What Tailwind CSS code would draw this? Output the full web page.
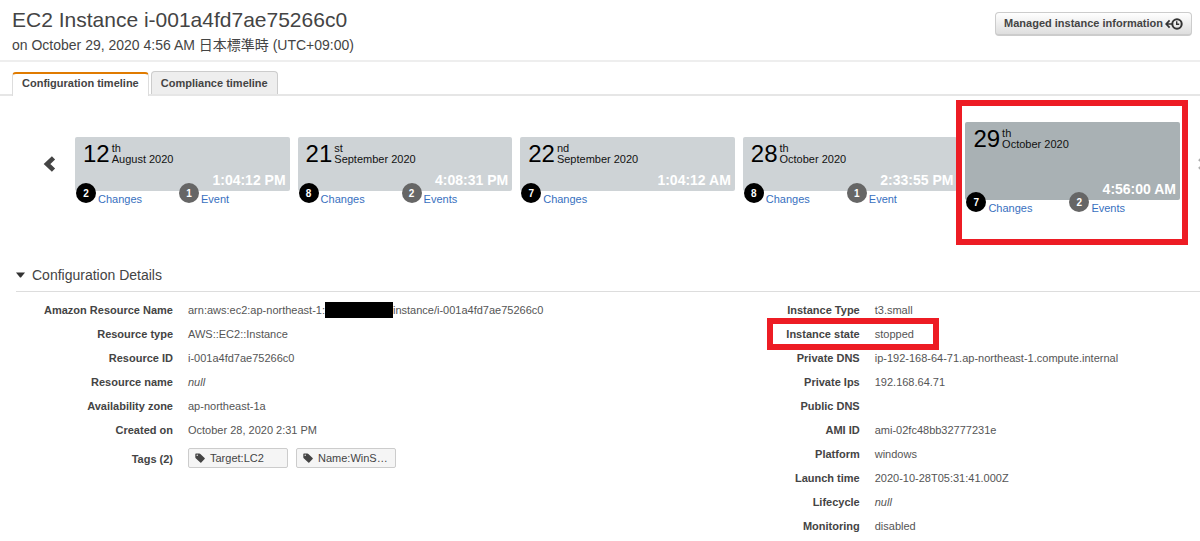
<!DOCTYPE html>
<html lang="en">
<head>
<meta charset="utf-8">
<meta name="viewport" content="width=device-width, initial-scale=1">
<title>EC2 Instance timeline</title>
<script src="https://cdn.jsdelivr.net/npm/@tailwindcss/browser@4"></script>
</head>
<body class="overflow-x-hidden bg-white font-['Liberation_Sans','Noto_Sans_CJK_JP',sans-serif] text-[11px] text-[#444]">
<svg class="hidden" aria-hidden="true">
  <symbol id="tag" viewBox="0 0 10 10"><path fill="currentColor" fill-rule="evenodd" d="M0.3 1.2Q0.3 .5 1 .5H4.4Q5 .5 5.4 .9L9.6 5.1Q10.1 5.6 9.6 6.1L6.3 9.4Q5.8 9.9 5.3 9.4L.7 5.2Q.3 4.8 .3 4.2ZM2.2 1.6A.7 .7 0 1 0 2.2 3A.7 .7 0 1 0 2.2 1.6Z"/></symbol>
</svg>

<header class="flex items-start justify-between border-b-2 border-[#eee] pt-[5px] pr-2 pb-1 pl-3">
  <div>
    <h1 class="text-[21px] leading-[29px]">EC2 Instance i-001a4fd7ae75266c0</h1>
    <p class="text-[14px] leading-[22px]">on October 29, 2020 4:56 AM 日本標準時 (UTC+09:00)</p>
  </div>
  <button class="mt-[7px] flex h-6 items-center gap-0.5 rounded-sm border border-b-2 border-[#ccc] bg-linear-to-b from-white to-[#dedede] px-2 font-bold">
    Managed instance information
    <svg class="h-3 w-[18px]" viewBox="0 0 18 12" fill="none" stroke="#333" aria-hidden="true"><circle cx="12" cy="6" r="4.7" stroke-width="2"/><path d="M11.7 3.2V6.3H14.2" stroke-width="1.4"/><path d="M7 6H1.2M4.6 2.4L1.2 6L4.6 9.6" stroke-width="1.7"/></svg>
  </button>
</header>

<nav class="mt-[9px] flex items-end border-b-2 border-[#e6e6e6] pl-3" role="tablist">
  <button role="tab" aria-selected="true" class="-mb-0.5 h-6 rounded-t-sm border-x border-t-2 border-x-[#ddd] border-t-[#e07b00] bg-white px-[9px] pb-[3px] font-bold">Configuration timeline</button>
  <button role="tab" aria-selected="false" class="ml-0.5 h-[23px] rounded-t-sm border border-b-0 border-[#ccc] bg-[#eee] px-[9px] font-bold">Compliance timeline</button>
</nav>

<section class="relative flex items-start pt-[26px]" aria-label="Timeline">
  <button class="mt-[34px] ml-[43px] mr-[18px] h-4 w-3.5 shrink-0" aria-label="Earlier"><svg class="h-4 w-3.5" viewBox="0 0 14 16" aria-hidden="true"><path d="M10.5 1.8L4 8L10.5 14.2" fill="none" stroke="#444" stroke-width="4.6"/></svg></button>
  <ol class="mr-5 grid flex-1 grid-cols-5 items-start gap-2">
    <li class="pt-[15px]">
      <div class="flex h-[54px] flex-col justify-between rounded-xs bg-[#ced3d6] pt-1 pr-1 pl-2 text-[#111]">
        <div class="flex gap-0.5"><span class="text-[24px] leading-[26px] text-black">12</span><span class="pt-0.5 leading-[11px]">th<br>August 2020</span></div>
        <time class="text-right text-[14px] leading-[22px] font-bold text-white">1:04:12 PM</time>
      </div>
      <div class="-mt-2 flex pl-px text-[#3870c0]">
        <a href="#" class="flex h-5 w-[103px] items-center gap-0.5"><span class="grid size-5 place-items-center rounded-full bg-black text-[10px] font-bold text-white">2</span><span class="pt-3">Changes</span></a>
        <a href="#" class="flex h-5 items-center gap-0.5"><span class="grid size-5 place-items-center rounded-full bg-[#666] text-[10px] font-bold text-white">1</span><span class="pt-3">Event</span></a>
      </div>
    </li>
    <li class="pt-[15px]">
      <div class="flex h-[54px] flex-col justify-between rounded-xs bg-[#ced3d6] pt-1 pr-1 pl-2 text-[#111]">
        <div class="flex gap-0.5"><span class="text-[24px] leading-[26px] text-black">21</span><span class="pt-0.5 leading-[11px]">st<br>September 2020</span></div>
        <time class="text-right text-[14px] leading-[22px] font-bold text-white">4:08:31 PM</time>
      </div>
      <div class="-mt-2 flex pl-px text-[#3870c0]">
        <a href="#" class="flex h-5 w-[103px] items-center gap-0.5"><span class="grid size-5 place-items-center rounded-full bg-black text-[10px] font-bold text-white">8</span><span class="pt-3">Changes</span></a>
        <a href="#" class="flex h-5 items-center gap-0.5"><span class="grid size-5 place-items-center rounded-full bg-[#666] text-[10px] font-bold text-white">2</span><span class="pt-3">Events</span></a>
      </div>
    </li>
    <li class="pt-[15px]">
      <div class="flex h-[54px] flex-col justify-between rounded-xs bg-[#ced3d6] pt-1 pr-1 pl-2 text-[#111]">
        <div class="flex gap-0.5"><span class="text-[24px] leading-[26px] text-black">22</span><span class="pt-0.5 leading-[11px]">nd<br>September 2020</span></div>
        <time class="text-right text-[14px] leading-[22px] font-bold text-white">1:04:12 AM</time>
      </div>
      <div class="-mt-2 flex pl-px text-[#3870c0]">
        <a href="#" class="flex h-5 items-center gap-0.5"><span class="grid size-5 place-items-center rounded-full bg-black text-[10px] font-bold text-white">7</span><span class="pt-3">Changes</span></a>
      </div>
    </li>
    <li class="pt-[15px]">
      <div class="flex h-[54px] flex-col justify-between rounded-xs bg-[#ced3d6] pt-1 pr-1 pl-2 text-[#111]">
        <div class="flex gap-0.5"><span class="text-[24px] leading-[26px] text-black">28</span><span class="pt-0.5 leading-[11px]">th<br>October 2020</span></div>
        <time class="text-right text-[14px] leading-[22px] font-bold text-white">2:33:55 PM</time>
      </div>
      <div class="-mt-2 flex pl-px text-[#3870c0]">
        <a href="#" class="flex h-5 w-[103px] items-center gap-0.5"><span class="grid size-5 place-items-center rounded-full bg-black text-[10px] font-bold text-white">8</span><span class="pt-3">Changes</span></a>
        <a href="#" class="flex h-5 items-center gap-0.5"><span class="grid size-5 place-items-center rounded-full bg-[#666] text-[10px] font-bold text-white">1</span><span class="pt-3">Event</span></a>
      </div>
    </li>
    <li class="relative" aria-current="true">
      <div class="flex h-[78px] flex-col justify-between rounded-xs bg-[#a9b1b4] pt-1 pr-1 pl-2 text-[#111]">
        <div class="flex gap-0.5"><span class="text-[24px] leading-[26px] text-black">29</span><span class="pt-0.5 leading-[11px]">th<br>October 2020</span></div>
        <time class="text-right text-[14px] leading-[22px] font-bold text-white">4:56:00 AM</time>
      </div>
      <div class="-mt-2 flex pl-px text-[#3870c0]">
        <a href="#" class="flex h-5 w-[103px] items-center gap-0.5"><span class="grid size-5 place-items-center rounded-full bg-black text-[10px] font-bold text-white">7</span><span class="pt-3">Changes</span></a>
        <a href="#" class="flex h-5 items-center gap-0.5"><span class="grid size-5 place-items-center rounded-full bg-[#666] text-[10px] font-bold text-white">2</span><span class="pt-3">Events</span></a>
      </div>
      <div class="pointer-events-none absolute -top-[22px] -right-2 -bottom-[33px] -left-[9px] border-6 border-[#ed1c24]"></div>
    </li>
  </ol>
  <svg class="absolute top-[60px] right-0 h-4 w-0.5" viewBox="0 0 2 16" aria-hidden="true"><path d="M.5 4L2 2.8V5.5ZM.5 12L2 10.5V13.2Z" fill="#aaa" stroke="#aaa" stroke-width=".6"/></svg>
</section>

<section class="mt-[53px] pl-4">
  <h2 class="border-b border-[#ddd] pb-1.5 text-[14px] leading-5">
    <button class="flex items-center gap-[7px]"><svg class="h-1.5 w-[9px]" viewBox="0 0 9 6" aria-hidden="true"><path d="M0 .5H9L5 5.5H4Z" fill="#333"/></svg>Configuration Details</button>
  </h2>
  <div class="grid grid-cols-[58fr_42fr] pt-1.5 leading-6">
    <dl>
      <div class="flex gap-[15px]"><dt class="w-[157px] text-right font-bold">Amazon Resource Name</dt><dd class="flex items-center text-[#555]">arn:aws:ec2:ap-northeast-1:<span class="h-4 w-[68px] bg-black"></span>instance/i-001a4fd7ae75266c0</dd></div>
      <div class="flex gap-[15px]"><dt class="w-[157px] text-right font-bold">Resource type</dt><dd class="text-[#555]">AWS::EC2::Instance</dd></div>
      <div class="flex gap-[15px]"><dt class="w-[157px] text-right font-bold">Resource ID</dt><dd class="text-[#555]">i-001a4fd7ae75266c0</dd></div>
      <div class="flex gap-[15px]"><dt class="w-[157px] text-right font-bold">Resource name</dt><dd class="text-[#555] italic">null</dd></div>
      <div class="flex gap-[15px]"><dt class="w-[157px] text-right font-bold">Availability zone</dt><dd class="text-[#555]">ap-northeast-1a</dd></div>
      <div class="flex gap-[15px]"><dt class="w-[157px] text-right font-bold">Created on</dt><dd class="text-[#555]">October 28, 2020 2:31 PM</dd></div>
      <div class="flex gap-[15px] pt-[3px]"><dt class="w-[157px] pt-0.5 text-right font-bold">Tags (2)</dt>
        <dd class="flex items-center gap-2">
          <span class="flex h-5 w-[100px] items-center gap-[5px] rounded-xs border border-[#ccc] bg-[#f5f5f5] px-1.5"><svg class="size-2.5"><use href="#tag"/></svg>Target:LC2</span>
          <span class="flex h-5 w-[100px] items-center gap-[5px] rounded-xs border border-[#ccc] bg-[#f5f5f5] px-1.5"><svg class="size-2.5"><use href="#tag"/></svg>Name:WinS…</span>
        </dd></div>
    </dl>
    <dl>
      <div class="flex gap-[15px]"><dt class="w-[157px] text-right font-bold">Instance Type</dt><dd class="text-[#555]">t3.small</dd></div>
      <div class="relative flex gap-[15px]"><dt class="w-[157px] text-right font-bold">Instance state</dt><dd class="text-[#555]">stopped</dd>
        <div class="pointer-events-none absolute -top-1 left-16 h-8 w-[172px] border-6 border-[#ed1c24]"></div></div>
      <div class="flex gap-[15px]"><dt class="w-[157px] text-right font-bold">Private DNS</dt><dd class="text-[#555]">ip-192-168-64-71.ap-northeast-1.compute.internal</dd></div>
      <div class="flex gap-[15px]"><dt class="w-[157px] text-right font-bold">Private Ips</dt><dd class="text-[#555]">192.168.64.71</dd></div>
      <div class="flex gap-[15px]"><dt class="w-[157px] text-right font-bold">Public DNS</dt><dd></dd></div>
      <div class="flex gap-[15px]"><dt class="w-[157px] text-right font-bold">AMI ID</dt><dd class="text-[#555]">ami-02fc48bb32777231e</dd></div>
      <div class="flex gap-[15px]"><dt class="w-[157px] text-right font-bold">Platform</dt><dd class="text-[#555]">windows</dd></div>
      <div class="flex gap-[15px]"><dt class="w-[157px] text-right font-bold">Launch time</dt><dd class="text-[#555]">2020-10-28T05:31:41.000Z</dd></div>
      <div class="flex gap-[15px]"><dt class="w-[157px] text-right font-bold">Lifecycle</dt><dd class="text-[#555] italic">null</dd></div>
      <div class="flex gap-[15px]"><dt class="w-[157px] text-right font-bold">Monitoring</dt><dd class="text-[#555]">disabled</dd></div>
    </dl>
  </div>
</section>
</body>
</html>
